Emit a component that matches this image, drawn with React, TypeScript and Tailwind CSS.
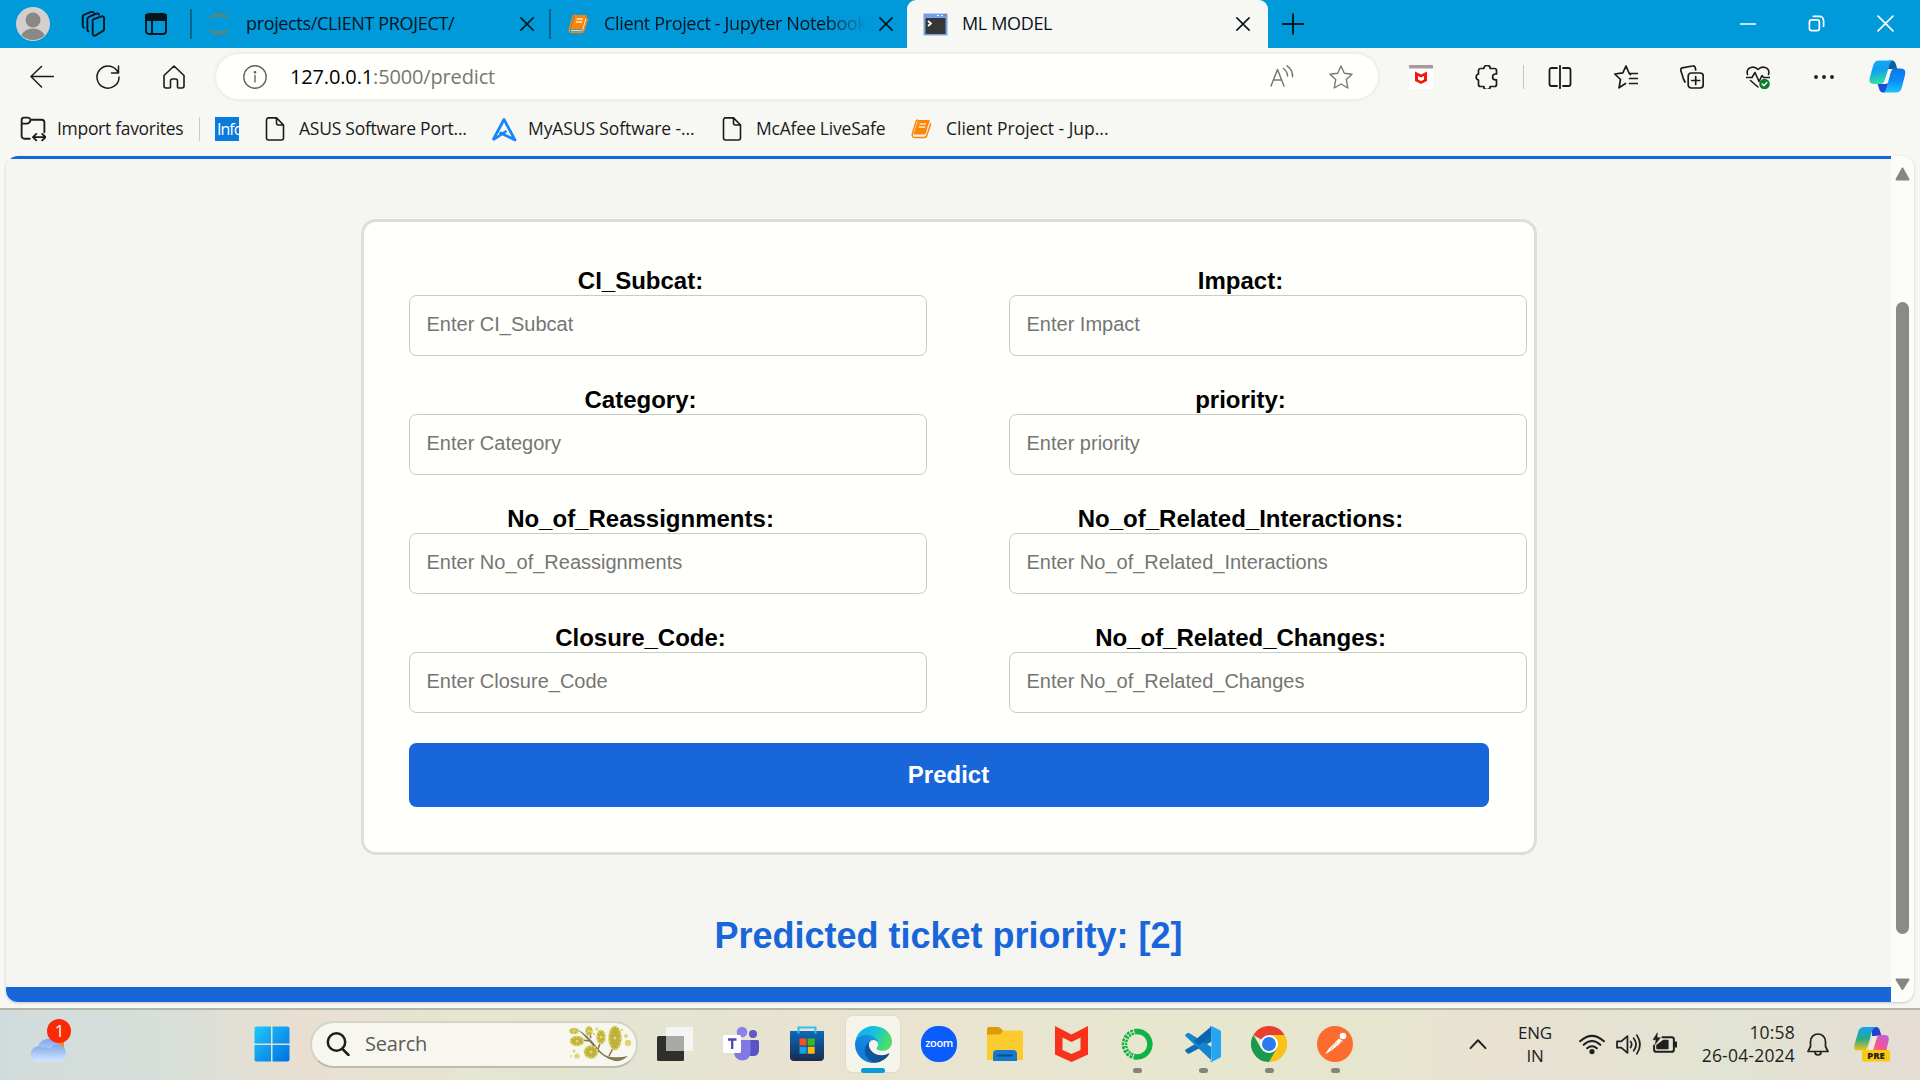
import type { ReactNode } from "react";

type IconProps = { children: ReactNode; size?: number; className?: string; sw?: number };

function Line({ children, size = 24, className = "", sw = 1.6 }: IconProps) {
  return (
    <svg width={size} height={size} viewBox="0 0 24 24" fill="none" stroke="currentColor" strokeWidth={sw} strokeLinecap="round" strokeLinejoin="round" className={`shrink-0 ${className}`}>
      {children}
    </svg>
  );
}

const CloseX = () => (
  <Line size={14} sw={2.6}>
    <path d="M1.500 1.500 22.500 22.500M22.500 1.500 1.500 22.500" />
  </Line>
);

const Page = () => (
  <Line>
    <path d="M5 0.900h8.500L20.500 8v13a2 2 0 0 1-2 2H5.500a2 2 0 0 1-2-2V2.900a2 2 0 0 1 2-2zM13.500 1v5a2 2 0 0 0 2 2h5" />
  </Line>
);

const Book = () => (
  <svg width="22" height="22" viewBox="0 0 22 22" className="shrink-0">
    <path d="M8 2h10.500q1.500 0 1.200 1.500l-3 11.500q-.4 1.500-2 1.500H3.500z" fill="#fd8505" />
    <path d="M8 2q-1.500 0-2 1.500L2.500 15.500q-1 4 2 4h10q1.700 0 2.200-1.700L20.800 5.500" fill="none" stroke="#fd8505" strokeWidth="1.500" strokeLinejoin="round" />
    <path d="M4 17.700h10.500q1 0 1.400-1.300L19 5.500" fill="none" stroke="#fde9d0" strokeWidth="1" />
    <path d="M9.500 6h6.500M8.700 9h6.500" stroke="#ffe9cf" strokeWidth="1.300" />
  </svg>
);

function TabBar() {
  return (
    <div className="flex h-12 items-center bg-[#0099da] text-[18px] tracking-[-0.35px] text-[#06141c]">
      <svg width="34" height="34" viewBox="0 0 34 34" className="ml-4 shrink-0">
        <circle cx="17" cy="17" r="17" fill="#d2d0ce" />
        <circle cx="17" cy="13" r="7.500" fill="#8a8886" />
        <path d="M5.500 28.500a11.800 9 0 0 1 23 0 17 17 0 0 1-23 0z" fill="#8a8886" />
      </svg>
      <Line size={26} className="ml-[30px]" sw={1.700}>
        <path d="M12.200 7.700l7.600-2.800a1.700 1.700 0 0 1 2.400 1.600v10.200a2 2 0 0 1-1.300 1.900l-6.700 4a1.700 1.700 0 0 1-2.500-1.500V9.700a2 2 0 0 1 .5-2z" />
        <path d="M7.800 18.800a2 2 0 0 1-1-1.800V7.500a2 2 0 0 1 1-1.800l7.200-3.200a2 2 0 0 1 2.700.9M4 15.500a2 2 0 0 1-1.500-2V5.300a2 2 0 0 1 1-1.700L10.300.9q1.200-.4 2.200.4" />
      </Line>
      <Line size={24} className="ml-[38px]" sw={1.900}>
        <rect x="2" y="2" width="20" height="20" rx="3" />
        <path d="M2 3h20v5H2z" fill="currentColor" />
        <path d="M8 8v14" />
      </Line>
      <div className="ml-[22px] h-[30px] w-[2px] bg-[#04628c]" />
      <svg width="24" height="24" viewBox="0 0 24 24" className="ml-[15px] shrink-0" fill="#56897c">
        <path d="M1.500 7a11.200 9 0 0 1 21 0 15 7.500 0 0 0-21 0zM1.500 17a11.200 9 0 0 0 21 0 15 7.500 0 0 1-21 0z" />
      </svg>
      <span className="ml-[15px] w-[274px] pb-px whitespace-nowrap">projects/CLIENT PROJECT/</span>
      <CloseX />
      <div className="ml-[15px] h-[30px] w-[2px] bg-[#04628c]" />
      <span className="ml-4"><Book /></span>
      <span className="ml-[15px] w-[262px] overflow-hidden bg-gradient-to-r from-[#06141c] from-85% to-[#0099da] bg-clip-text pb-px whitespace-nowrap text-transparent">
        Client Project - Jupyter Notebook
      </span>
      <span className="ml-[13px]"><CloseX /></span>
      <div className="ml-[14px] flex h-12 w-[361px] items-center rounded-t-[9px] bg-[#f7f7f4] pl-4">
        <svg width="25" height="23" viewBox="0 0 25 23">
          <rect x="0.500" y="0.500" width="24" height="22" fill="#7aa5e0" />
          <path d="M1 1h23v3H1z" fill="#6f9ff0" />
          <path d="M14 2.500h2M18 2.500h1.500" stroke="#fff" />
          <path d="M21 2.500h2" stroke="#e65a3c" strokeWidth="1.500" />
          <rect x="2.500" y="5" width="20" height="16" fill="#363636" />
          <path d="M5 8l3 2.500L5 13" fill="none" stroke="#fff" strokeWidth="1.700" />
        </svg>
        <span className="ml-[14px] w-[274px] pb-px">ML MODEL</span>
        <CloseX />
      </div>
      <Line size={22} className="ml-[14px]" sw={2}>
        <path d="M12 1v22M1 12h22" />
      </Line>
      <div className="ml-auto flex items-center pb-px text-white">
        <Line size={16} sw={2.200}><path d="M1 12h22" /></Line>
        <Line size={17} className="ml-[52px]" sw={2.400}>
          <rect x="2" y="7" width="14" height="15" rx="3" />
          <path d="M7.500 2H16a6 6 0 0 1 6 6v8" />
        </Line>
        <Line size={17} className="mr-[26px] ml-[52px]" sw={2.300}><path d="M1.500 1.500l21 21M22.500 1.500l-21 21" /></Line>
      </div>
    </div>
  );
}

function Cell({ children }: { children: ReactNode }) {
  return <div className="flex w-[66px] shrink-0 items-center justify-center">{children}</div>;
}

function Toolbar() {
  return (
    <div className="flex h-14 items-center pt-px text-[#1b1b1b]">
      <div className="w-[9px]" />
      <Cell><Line sw={1.500}><path d="M23.500 11.500H1M11.500 1.500L1 11.500l10.500 10.500" /></Line></Cell>
      <Cell><Line sw={1.500}><path d="M22.200 8A11 11 0 1 0 23 12M22.500 1v7h-7" /></Line></Cell>
      <Cell><Line sw={1.600}><path d="M2 10.500L12 1l10 9.500V21a2 2 0 0 1-2 2h-3.500a1 1 0 0 1-1-1v-6a2 2 0 0 0-2-2h-3a2 2 0 0 0-2 2v6a1 1 0 0 1-1 1H4a2 2 0 0 1-2-2z" /></Line></Cell>
      <div className="ml-[9px] flex h-[45px] w-[1162px] items-center rounded-full bg-[#fffffc] pl-[27px] shadow-[0_0_5px_rgba(0,0,0,0.1)]">
        <Line className="text-[#666]" sw={1.400}>
          <circle cx="12" cy="12" r="11.200" />
          <path d="M12 10.500v6.500" />
          <circle cx="12" cy="7.300" r=".7" fill="currentColor" />
        </Line>
        <span className="ml-[23px] text-[20px] tracking-[-0.15px] text-[#777]"><span className="text-black">127.0.0.1</span>:5000/predict</span>
        <Line className="ml-auto text-[#777]" sw={1.500}>
          <path d="M1 21L7.500 4.500 14 21M3.500 15h8M13.500 3.500q4 3 4 7.500M17 .8q6 4 5.500 11" />
        </Line>
        <Line className="mr-[25px] ml-[35px] text-[#777]" sw={1.400}>
          <path d="M12 1l3.300 7.200 7.700 1-5.700 5.400L18.800 23 12 19l-6.800 4 1.500-8.400L1 9.200l7.700-1z" />
        </Line>
      </div>
      <div className="w-[10px]" />
      <Cell>
        <svg width="24" height="24" viewBox="0 0 24 24">
          <path d="M0 0h24v24H0z" fill="#fff" />
          <path d="M0 0h24v3.500H0z" fill="#a89a98" />
          <path d="M6 6.500l6 3 6-3V16l-6 3-6-3zM9 11v3.500l3 1.500 3-1.500V11l-3 1.500z" fill="#f5180d" fillRule="evenodd" />
        </svg>
      </Cell>
      <Cell>
        <Line sw={1.700}><path d="M3.500 5.500a2 2 0 0 1 2-2h3.300a3.200 3.200 0 0 1 6.400 0h4.300a2 2 0 0 1 2 2V9h-1a2.800 2.800 0 0 0 0 5.800h1v4.700a2 2 0 0 1-2 2h-4.300a3 3 0 0 1-6.400 0H5.500a2 2 0 0 1-2-2v-4.500a3.100 3.100 0 0 1 0-6z" /></Line>
      </Cell>
      <div className="flex w-[7px] justify-center"><div className="h-6 w-px bg-[#c4c4c2]" /></div>
      <Cell><Line sw={1.800}><path d="M9 3H3.500a2 2 0 0 0-2 2v14a2 2 0 0 0 2 2H9M15 3h5.500a2 2 0 0 1 2 2v14a2 2 0 0 1-2 2H15M12 .8v22.400" /></Line></Cell>
      <Cell><Line sw={1.700}><path d="M16.500 9.500q-1-.5-1.500-1.500L12 1 8.800 7.800l-8 1.200L6.500 14.500 5 22.800l6.500-4.300M15.500 8.500H24M15.500 13.500h8.500M15.500 18.500h8.500" /></Line></Cell>
      <Cell>
        <Line sw={1.700}>
          <rect x="8.200" y="8" width="15" height="15" rx="3" />
          <path d="M15.700 11.500v8M11.700 15.500h8M5 17l-1.500-3L.8 5.500a2 2 0 0 1 1.400-2.600L12.500 1a2.300 2.300 0 0 1 2.700 1.500l.5 2.500" />
        </Line>
      </Cell>
      <Cell>
        <Line sw={1.600}>
          <path d="M1.500 9.500Q0 4 5 2.500q4-1.200 7 2 3-3.200 7-2 5 1.500 3.500 7M.5 12.500h5.500l3-5 4 9 3-6 1.500 2h6M4.500 15.500L12 22" />
          <circle cx="18.500" cy="19" r="5.300" fill="#0f7b2e" stroke="none" />
          <path d="M16.200 19l1.700 1.700 3-3.200" stroke="#fff" strokeWidth="1.300" />
        </Line>
      </Cell>
      <Cell>
        <svg width="24" height="24" viewBox="0 0 24 24" fill="currentColor"><circle cx="4" cy="12" r="1.900" /><circle cx="12" cy="12" r="1.900" /><circle cx="20" cy="12" r="1.900" /></svg>
      </Cell>
      <div className="flex w-[60px] justify-center"><Copilot /></div>
    </div>
  );
}

function Copilot() {
  return (
    <svg width="37" height="33" viewBox="0 0 37 33">
      <defs>
        <linearGradient id="cpA" x1="0" y1="0" x2="0.200" y2="1"><stop offset="0" stopColor="#12a9f8" /><stop offset=".45" stopColor="#0fa0ee" /><stop offset="1" stopColor="#2fe0a6" /></linearGradient>
        <linearGradient id="cpB" x1="0" y1="0" x2="0" y2="1"><stop offset="0" stopColor="#1272ea" /><stop offset=".5" stopColor="#0b8bf8" /><stop offset="1" stopColor="#19c4fd" /></linearGradient>
      </defs>
      <path d="M20 .5h2.500q3.500 0 4.500 4l1.200 4.500H19z" fill="#0a619f" />
      <path d="M8.500 23.500h11l-3.500 9h-2q-3 0-4-4z" fill="#1f4bdc" />
      <path d="M10 .5H25q-3.500.5-4.500 4l-4.800 16.500q-.9 3-3.700 3H5Q-.8 24 .8 17.500L4.500 4.500Q6 .5 10 .5z" fill="url(#cpA)" />
      <path d="M24 8.500h7.500q6 0 4.500 6.500L32.500 28.500q-1.200 4-5.500 4H12.500q4 0 5-4L21.500 12q.8-3.500 2.500-3.500z" fill="url(#cpB)" />
      <path d="M19.600 9.500H24q-1.500.5-2.200 2.500L19 21q-.8 3-3 3h-4q2.600-.3 3.500-3z" fill="#f7f7f4" />
    </svg>
  );
}

function Bookmarks() {
  return (
    <div className="flex h-[52px] items-center pb-[2px] pl-5 text-[17.500px] whitespace-nowrap text-[#1b1b1b]">
      <Line size={26} sw={1.700}>
        <path d="M9 21H4a2.500 2.500 0 0 1-2.500-2.500V3.500A2 2 0 0 1 3.500 1.500h4q1.500 0 2.500 2h10a2.500 2.500 0 0 1 2.500 2.500v9M1.500 7h5q2 0 3.500-3.500M12 19.500h11.500M15 16.500l-3 3 3 3M20.500 16.500l3 3-3 3" />
      </Line>
      <span className="ml-[11px] w-[142px] pb-[2px] tracking-[-0.3px]">Import favorites</span>
      <div className="h-6 w-px bg-[#c9c9c7]" />
      <div className="ml-[15px] h-6 w-6 overflow-hidden bg-[#0a7bdc] pl-[2px] text-[16px] leading-6 tracking-[-1px] text-white">Info</div>
      <div className="ml-6"><Page /></div>
      <span className="ml-3 w-[192px] pb-[2px] tracking-[-0.25px]">ASUS Software Port...</span>
      <svg width="26" height="25" viewBox="0 0 26 25" fill="none" stroke="#1583fb" strokeWidth="2.700" strokeLinejoin="round">
        <path d="M2 23L13 2.500 24 23 8.500 15.500M2 23l13.500-9" />
      </svg>
      <span className="ml-[11px] w-[192px] pb-[2px] tracking-[-0.1px]">MyASUS Software -...</span>
      <Page />
      <span className="ml-3 w-[154px] pb-[2px] tracking-[-0.2px]">McAfee LiveSafe</span>
      <Book />
      <span className="ml-[14px] pb-[2px] tracking-[-0.02px]">Client Project - Jup...</span>
    </div>
  );
}

const fields = [
  "CI_Subcat", "Impact", "Category", "priority",
  "No_of_Reassignments", "No_of_Related_Interactions", "Closure_Code", "No_of_Related_Changes",
];

function PageView() {
  return (
    <div className="mx-[6px] flex h-[846px] overflow-hidden rounded-[12px] bg-[#fcfcf9] shadow-[0_1px_3px_rgba(0,0,0,0.2)]">
      <div className="flex w-[1885px] flex-col items-center border-t-[3px] border-b-[15px] border-[#1966da] bg-[#f5f5f2] font-['Liberation_Sans',Arial,sans-serif]">
        <form className="mt-[60px] h-[636px] w-[1176px] rounded-[15px] border-[3px] border-[#dddedb] bg-[#fffffc] px-[45px] pt-[45px]">
          <div className="grid grid-cols-[464px_464px] gap-x-[136px]">
            {fields.map((f) => (
              <div key={f} className="h-[119px]">
                <label className="flex h-7 items-center justify-center text-[24px] leading-7 font-bold text-black">{f}:</label>
                <input placeholder={`Enter ${f}`} className="block h-[61px] w-[518px] rounded-[7.500px] border border-[#c8cac6] bg-[#fffffc] px-[17px] pb-[2px] text-[20px] placeholder:text-[#757575]" />
              </div>
            ))}
          </div>
          <button type="button" className="h-16 w-[1080px] rounded-[7.500px] bg-[#1966da] text-[24px] font-bold text-white">Predict</button>
        </form>
        <h1 className="mt-[60px] text-[36px] leading-[42px] font-bold text-[#1966da]">Predicted ticket priority: [2]</h1>
      </div>
      <div className="flex w-[23px] flex-col items-center pt-[11px] pb-[11px]">
        <svg width="15" height="14" viewBox="0 0 15 14"><path d="M7.500 1.500L13.500 12.500H1.500z" fill="#868686" stroke="#868686" strokeWidth="2" strokeLinejoin="round" /></svg>
        <div className="mt-[121px] h-[632px] w-[13px] rounded-full bg-[#8a8a89]" />
        <svg width="15" height="13" viewBox="0 0 15 13" className="mt-auto"><path d="M7.500 11L13.500 1.500H1.500z" fill="#868686" stroke="#868686" strokeWidth="2" strokeLinejoin="round" /></svg>
      </div>
    </div>
  );
}

function TaskItem({ children, dot = false, width = "w-[66px]" }: { children: ReactNode; dot?: boolean; width?: string }) {
  return (
    <div className={`relative flex h-full shrink-0 items-center justify-center ${width}`}>
      {children}
      {dot && <div className="absolute bottom-[5px] h-[5px] w-[9px] rounded-full bg-[#85837a]" />}
    </div>
  );
}

/* cx, cy, rx, ry of each flower cluster on the branch */
const blossoms: [number, number, number, number][] = [
  [5, 6, 4.5, 3], [20, 6, 3.500, 4.500], [8, 16, 7, 5], [32, 12, 4.500, 7], [22, 27, 7, 6.500], [46, 13, 6.500, 12],
];
const pollen: [number, number, number][] = [
  [59, 18, 3.2], [57, 11, 2], [53, 5, 1.2], [28, 4, 1.7], [8, 31, 2.6], [5, 26, 1.5], [2, 31, 1], [25, 9, 1.2],
];

function Taskbar() {
  return (
    <div className="flex h-[72px] items-center border-t-2 border-[#b4b4a8] bg-[linear-gradient(90deg,#d0dcdc_0%,#d8dfd9_9%,#e9dfd1_16%,#e5e6d1_25%,#e3e5d2_33%,#e9e3d0_42%,#e7e6cf_60%,#e6e6cf_72%,#e9e1d1_78%,#e2e4d3_90%,#e5dcd3_100%)] pb-[2px] text-[#1f1f1f]">
      <svg width="46" height="54" viewBox="0 0 46 54" className="ml-[28px] shrink-0">
        <defs>
          <linearGradient id="cl" x1="0" y1="0" x2="0" y2="1"><stop offset="0" stopColor="#7fa6ea" /><stop offset="1" stopColor="#d5e7ff" /></linearGradient>
        </defs>
        <path d="M28 24h8v8h-8z" fill="#f58a1c" />
        <path d="M9 34a12 12 0 0 1 23-5 9 9 0 0 1-3 12H12z" fill="url(#cl)" />
        <path d="M10 44.500a7.500 7.500 0 1 1 4-14 11 11 0 0 1 8 1.500 8.500 8.500 0 1 1 7 12.500z" fill="url(#cl)" />
        <circle cx="31" cy="14" r="12" fill="#fa2a05" />
        <text x="31.500" y="20" textAnchor="middle" fontSize="17" fill="#fff" fontFamily="Open Sans, sans-serif">1</text>
      </svg>
      <svg width="36" height="36" viewBox="0 0 36 36" className="ml-[180px] shrink-0">
        <defs>
          <linearGradient id="win" x1="0" y1="0" x2="1" y2="1"><stop offset="0" stopColor="#21c8fb" /><stop offset="1" stopColor="#0070e4" /></linearGradient>
        </defs>
        <path d="M2.500.5H17v17H.5v-15q0-2 2-2zM18.500.5h15q2 0 2 2v15h-17zM.5 19H17v16.500H2.500q-2 0-2-2zM18.500 19h17v14.500q0 2-2 2h-15z" fill="url(#win)" />
      </svg>
      <div className="ml-5 flex h-[47px] w-[328px] shrink-0 items-center rounded-full border-2 border-[#d4d4c6] border-b-[#bcbcae] bg-[#f7f7ef] pl-[14px]">
        <Line size={24} sw={2.500}><circle cx="10.500" cy="10" r="8.700" /><path d="M16.500 17l6 6" /></Line>
        <span className="ml-[15px] text-[20px] tracking-[-0.2px] text-[#5c5c58]">Search</span>
        <svg width="63" height="38" viewBox="0 0 63 38" className="mr-1 ml-auto">
          <path d="M8 4q11 6 19 17t15 11q9 1 17-1-6 6-13 5Q34 33 25 22T8 4z" fill="#857656" />
          <path d="M12 15l9 1M22 13l-2-6M29 24l3-8M40 31l5-10M28 27l-6-1" stroke="#857656" strokeWidth="1.500" />
          {blossoms.map(([x, y, rx, ry], i) => (
            <g key={i}>
              <ellipse cx={x} cy={y} rx={rx} ry={ry} fill="#bcb13c" />
              <ellipse cx={x} cy={y} rx={rx - 0.7} ry={ry - 0.7} fill="none" stroke="#ddd565" strokeWidth="2" strokeDasharray="2.200 1.600" />
              <circle cx={x} cy={y} r="1.500" fill="#e0d970" />
            </g>
          ))}
          {pollen.map(([x, y, r], i) => (
            <circle key={i} cx={x} cy={y} r={r} fill="#dcd580" />
          ))}
        </svg>
      </div>
      <TaskItem width="w-[70px]">
        <svg width="36" height="36" viewBox="0 0 36 36" className="ml-[3px]">
          <path d="M9 1h27v24H9z" fill="#f4f4f2" />
          <path d="M1.500 10h24q1.500 0 1.500 1.500v22q0 1.500-1.500 1.500h-24Q0 35 0 33.500v-22Q0 10 1.500 10z" fill="#2f2f2d" />
          <path d="M9 10h18v15H9z" fill="#a8a8a6" />
        </svg>
      </TaskItem>
      <TaskItem>
        <svg width="36" height="36" viewBox="0 0 36 36">
          <circle cx="19" cy="6" r="5.300" fill="#8a83e6" />
          <circle cx="30" cy="8" r="4" fill="#6057c8" />
          <path d="M24 14h10.500q1.500 0 1.500 1.500V25q-1 5-5 5h-7z" fill="#5b53c2" />
          <path d="M11 14h16.500v11.500q0 8.500-8 9-8-.5-8.500-8.500z" fill="#8079e3" />
          <rect x="0" y="9" width="18" height="18" rx="1.500" fill="#fff" />
          <path d="M5 13.500h8.500M9.200 13.500V23" stroke="#5047b5" strokeWidth="2.300" />
        </svg>
      </TaskItem>
      <TaskItem>
        <svg width="36" height="36" viewBox="0 0 36 36">
          <defs><linearGradient id="st" x1="0" y1="0" x2="0" y2="1"><stop offset="0" stopColor="#0a6abf" /><stop offset="1" stopColor="#1c2b4c" /></linearGradient></defs>
          <path d="M1 5h34v26q0 4-4 4H5q-4 0-4-4z" fill="url(#st)" />
          <path d="M9.500 7.500V1.500h17v6" fill="none" stroke="#2fc0f0" strokeWidth="2" />
          <path d="M10.500 12.500h7v7h-7z" fill="#f8511f" /><path d="M18.700 12.500h7v7h-7z" fill="#3dbb18" />
          <path d="M10.500 20.700h7v7h-7z" fill="#14a1ef" /><path d="M18.700 20.700h7v7h-7z" fill="#fdb909" />
        </svg>
      </TaskItem>
      <TaskItem>
        <div className="flex h-[58px] w-14 items-center justify-center rounded-lg border border-[#dedccb] bg-[#f5f4ea]">
          <svg width="37" height="37" viewBox="0 0 256 256">
            <defs>
              <linearGradient id="e1" x1="0" y1="0" x2="1" y2="0"><stop offset="0" stopColor="#0c59a4" /><stop offset="1" stopColor="#114a8b" /></linearGradient>
              <linearGradient id="e2" x1="1" y1="0" x2="0" y2="1"><stop offset="0" stopColor="#1b9de2" /><stop offset=".6" stopColor="#1180e0" /><stop offset="1" stopColor="#2370d0" /></linearGradient>
              <linearGradient id="e3" x1="0" y1="0" x2="1" y2=".3"><stop offset="0" stopColor="#12a8ee" /><stop offset=".5" stopColor="#12bfe6" /><stop offset="1" stopColor="#48e067" /></linearGradient>
            </defs>
            <path d="M231 190.500c-3.400 1.800-6.900 3.400-10.500 4.700a101.900 101.900 0 0 1-35.900 6.500c-47.300 0-88.500-32.500-88.500-74.300.1-11.400 6.400-21.900 16.400-27.300-42.800 1.800-53.800 46.400-53.800 72.500 0 73.900 68.100 81.400 82.800 81.400 7.900 0 19.800-2.300 27-4.600l1.300-.4a128.300 128.300 0 0 0 66.600-52.800 4 4 0 0 0-5.400-5.700z" fill="url(#e1)" />
            <path d="M105.700 241.400A79.200 79.200 0 0 1 83 220.100a80.700 80.700 0 0 1 29.500-120c3.200-1.500 8.500-4.100 15.600-4a32.400 32.400 0 0 1 25.700 13 31.900 31.900 0 0 1 6.300 18.700c0-.2 24.500-79.600-80-79.600-43.900 0-80 41.700-80 78.200a130.200 130.200 0 0 0 12.100 56 128 128 0 0 0 156.400 67 75.500 75.500 0 0 1-62.800-8z" fill="url(#e2)" />
            <path d="M152.300 148.900c-.9 1-3.400 2.500-3.400 5.600 0 2.600 1.700 5.200 4.800 7.300 14.300 10 41.400 8.600 41.500 8.600a59.600 59.600 0 0 0 30.300-8.300 61.400 61.400 0 0 0 30.400-52.900c.3-22.400-8-37.300-11.300-43.900C223.500 23.900 177.700 0 128 0A128 128 0 0 0 0 126.200c.5-36.500 36.800-66 80-66 3.500 0 23.500.3 42 10.100 16.300 8.600 24.900 19 30.800 29.200 6.200 10.700 7.300 24.100 7.300 29.500 0 5.300-2.700 13.300-7.800 19.900z" fill="url(#e3)" />
          </svg>
        </div>
        <div className="absolute bottom-[5px] h-[5px] w-6 rounded-full bg-[#0a9bd8]" />
      </TaskItem>
      <TaskItem>
        <div className="flex h-9 w-9 items-center justify-center rounded-[17px] bg-[#0b5cff] pb-[2px] text-[11px] font-semibold tracking-[-0.4px] text-white">zoom</div>
      </TaskItem>
      <TaskItem>
        <svg width="36" height="34" viewBox="0 0 36 34">
          <path d="M0 2q0-2 2-2h9q1.500 0 3 1.500L16 4v8H0z" fill="#dc9b07" />
          <path d="M0 7.500h11.500q2 0 3.500-2l1.500-2H34q2 0 2 2V33H0z" fill="#fccc2f" />
          <path d="M6 34V27q0-4 4-4h16q4 0 4 4v7z" fill="#137ad0" />
          <path d="M11 28.500h14" stroke="#0b4c8f" strokeWidth="2" strokeLinecap="round" />
        </svg>
      </TaskItem>
      <TaskItem>
        <svg width="33" height="36" viewBox="0 0 33 36">
          <path d="M0 0l16.500 8.500L33 0v28.500L16.500 36 0 28.500zM7.500 11.500v12.500L16.500 28l9-4V11.500L16.500 16z" fill="#f9301a" fillRule="evenodd" />
        </svg>
      </TaskItem>
      <TaskItem dot>
        <svg width="34" height="34" viewBox="0 0 34 34" fill="none">
          <path d="M17 4.500a12.700 12.700 0 1 1-3 25" stroke="#0fb344" strokeWidth="5.500" />
          <path d="M17 4.500a12.700 12.700 0 0 0-3 25" stroke="#0fb344" strokeWidth="5.500" strokeDasharray="2.600 1" />
          <path d="M14 4.800a12.700 12.700 0 0 0-1.500 24" stroke="#e9f2dc" strokeWidth="1" strokeDasharray="3 2" />
        </svg>
      </TaskItem>
      <TaskItem dot>
        <svg width="36" height="36" viewBox="0 0 36 36">
          <path d="M26.500 8.500v7.200L4.500 27.500Q3 28 2 27L.4 25.300q-.7-.9.200-1.800z" fill="#0c6fb8" />
          <path d="M.6 10.300q-.8-.9 0-1.700L2.500 7Q3.500 6.500 4.500 7.200L26.500 21v7.500L26 34z" fill="#1485d0" />
          <path d="M26.500.2L9 15l5 4.500 12.500-10z" fill="#0a67ad" />
          <path d="M26.500 0L35 4.200q1 .5 1 1.600v24.400q0 1.100-1 1.600L26.500 36q-1.500.2-2-.6 1.500.5 2-1V2q-.3-1.500-2-1.200.8-1 2-.8z" fill="#27a4f2" />
        </svg>
      </TaskItem>
      <TaskItem dot>
        <svg width="36" height="36" viewBox="0 0 36 36">
          <path d="M18 18L2.400 9A18 18 0 0 1 33.600 9z" fill="#e8402f" />
          <path d="M18 18v-9h15.600A18 18 0 0 1 18 36l7.800-13.500z" fill="#fbc116" />
          <path d="M18 18l7.800 4.500L18 36A18 18 0 0 1 2.400 9l7.800 13.500z" fill="#1a9a4c" />
          <circle cx="18" cy="18" r="9" fill="#fff" /><circle cx="18" cy="18" r="7" fill="#2b7bf0" />
        </svg>
      </TaskItem>
      <TaskItem dot>
        <svg width="36" height="36" viewBox="0 0 36 36">
          <circle cx="18" cy="18" r="18" fill="#fc6c2f" />
          <circle cx="26" cy="10" r="3.300" fill="#fff" />
          <path d="M22 12.500L26 15 15 24l-7 4.500L11.500 23z" fill="#fff" />
          <path d="M20 16l-6 7M24.500 14.500l-4 8" stroke="#fc8c55" strokeWidth=".8" />
        </svg>
      </TaskItem>
      <div className="ml-auto flex h-full items-center pr-[30px]">
        <Line size={18} sw={2.600} className="mr-[30px]"><path d="M2 17.500L12 7l10 10.500" /></Line>
        <div className="w-[36px] text-center text-[17px] leading-[23px] tracking-[-0.2px]">ENG<br />IN</div>
        <Line size={26} sw={1.800} className="ml-[26px]">
          <path d="M1 9.500q11-10 22 0M4.300 12.700q7.700-7 15.400 0M7.500 16q4.500-4 9 0" /><circle cx="12" cy="19" r="1.500" fill="currentColor" />
        </Line>
        <Line size={25} sw={1.700} className="ml-[11px]">
          <path d="M1 9v6h4l6 5V4L5 9zM14 9q2 3 0 6M17 6q4.500 6 0 12M20 3q6 9 0 18" />
        </Line>
        <Line size={25} sw={1.900} className="ml-[11px]">
          <path d="M10 5h9a2 2 0 0 1 2 2v10a2 2 0 0 1-2 2H4a2 2 0 0 1-2-2v-4" />
          <path d="M22 10h1.500v4H22z" fill="currentColor" />
          <path d="M11 8.500h4v7H5V13z" fill="currentColor" />
          <path d="M5 1L1 7.500h3L3 12l5-6.500H5z" fill="currentColor" strokeWidth=".5" />
        </Line>
        <div className="ml-[20px] w-[98px] text-right text-[17.500px] leading-[23.500px] tracking-[0.2px] whitespace-nowrap">10:58<br />26-04-2024</div>
        <Line size={24} sw={1.700} className="ml-[11px]">
          <path d="M12 2a7.500 7.500 0 0 0-7.500 7.500v5L2 19.500h20l-2.500-5v-5A7.500 7.500 0 0 0 12 2zM9 20a3 3 0 0 0 6 0" />
        </Line>
        <svg width="36" height="36" viewBox="0 0 36 36" className="ml-[24px]">
          <defs>
            <linearGradient id="p1" x1="0" y1="0" x2="0" y2="1"><stop offset="0" stopColor="#18a0f5" /><stop offset=".5" stopColor="#24aa8a" /><stop offset="1" stopColor="#f0c515" /></linearGradient>
            <linearGradient id="p2" x1="1" y1="0" x2="0" y2="1"><stop offset="0" stopColor="#b264f2" /><stop offset=".5" stopColor="#f9528e" /><stop offset="1" stopColor="#ff9060" /></linearGradient>
          </defs>
          <path d="M18 1h4q3 0 4 4l1.500 5H18z" fill="#1d45cc" />
          <path d="M23 9h8q5 0 3.500 6L32 26H8l7-2 5-12z" fill="url(#p2)" />
          <path d="M10 1h12q-3 1-4 4l-4.500 16q-1 3.500-4 3.500H4q-5 0-3.500-6L4.500 5Q6 1 10 1z" fill="url(#p1)" />
          <path d="M19 10h4.500l-4.500 14h-4.500z" fill="#efe9de" />
          <rect x="8" y="24" width="28" height="11.500" rx="2" fill="#f7ca0c" />
          <text x="22" y="33.200" textAnchor="middle" fontSize="9.500" fontWeight="800" fill="#222" fontFamily="Open Sans, sans-serif">PRE</text>
        </svg>
      </div>
    </div>
  );
}

export default function App() {
  return (
    <div className="h-[1080px] w-[1920px] overflow-hidden bg-[#f7f7f4] font-['Open_Sans','Noto_Sans',sans-serif]">
      <TabBar />
      <Toolbar />
      <Bookmarks />
      <PageView />
      <div className="h-[6px]" />
      <Taskbar />
    </div>
  );
}
